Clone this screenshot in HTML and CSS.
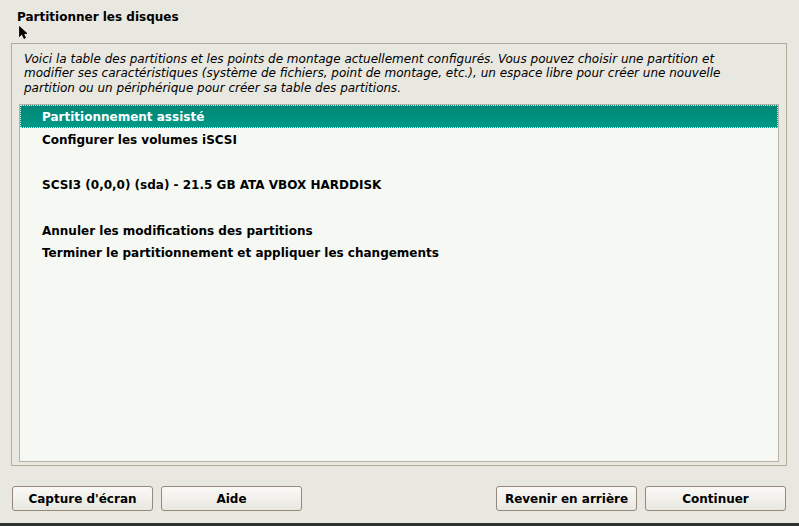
FILE: index.html
```html
<!DOCTYPE html>
<html lang="fr">
<head>
<meta charset="utf-8">
<title>Partitionner les disques</title>
<link rel="stylesheet" href="styles.css">
</head>
<body>
<div class="page">
  <h1 class="title">Partitionner les disques</h1>
  <div class="frame">
    <p class="desc">Voici la table des partitions et les points de montage actuellement configurés. Vous pouvez choisir une partition et modifier ses caractéristiques (système de fichiers, point de montage, etc.), un espace libre pour créer une nouvelle partition ou un périphérique pour créer sa table des partitions.</p>
    <ul class="list">
      <li class="row selected">Partitionnement assisté</li>
      <li class="row">Configurer les volumes iSCSI</li>
      <li class="row"></li>
      <li class="row">SCSI3 (0,0,0) (sda) - 21.5 GB ATA VBOX HARDDISK</li>
      <li class="row"></li>
      <li class="row">Annuler les modifications des partitions</li>
      <li class="row">Terminer le partitionnement et appliquer les changements</li>
    </ul>
  </div>
  <div class="buttons">
    <div class="group">
      <button class="btn">Capture d'écran</button>
      <button class="btn">Aide</button>
    </div>
    <div class="group">
      <button class="btn">Revenir en arrière</button>
      <button class="btn">Continuer</button>
    </div>
  </div>
  <div class="taskbar"></div>
  <svg class="cursor" width="10" height="14" viewBox="0 0 10 14">
    <path d="M0.5 0.5 L0.5 10.5 L3 8 L5 12.5 L6.5 11.8 L4.6 7.5 L8 7.5 Z" fill="#000" stroke="#000" stroke-width="0.8" stroke-linejoin="miter"/>
  </svg>
</div>
</body>
</html>
```
FILE: styles.css
```css
* { box-sizing: border-box; }
html, body {
  margin: 0;
  padding: 0;
  width: 799px;
  height: 526px;
  overflow: hidden;
  background: #e8e7e0;
  font-family: "DejaVu Sans", sans-serif;
  color: #000;
}
.page {
  position: relative;
  width: 799px;
  height: 526px;
  display: flex;
  flex-direction: column;
}
.title {
  margin: 0;
  padding: 9px 0 0 17px;
  height: 43px;
  font-size: 12px;
  font-weight: bold;
  line-height: 16px;
}
.frame {
  margin: 0 12px 0 11px;
  height: 424px;
  border: 1px solid #b4ab9b;
  display: flex;
  flex-direction: column;
  padding: 0 7px 3px 7px;
}
.desc {
  margin: 0;
  padding: 8px 0 0 5px;
  width: 730px;
  height: 60px;
  font-size: 12px;
  font-style: italic;
  line-height: 14.5px;
}
.list {
  list-style: none;
  margin: 0;
  padding: 0;
  flex: 1;
  background: #f5f8f3;
  border: 1px solid #b9b2a4;
  font-size: 12px;
  font-weight: bold;
}
.row {
  height: 22.67px;
  line-height: 24px;
  padding-left: 22px;
  white-space: nowrap;
}
.selected {
  height: 23px;
  background: linear-gradient(#008576, #009a86);
  color: #fff;
  outline: 1px dotted #d8efe9;
  outline-offset: -1px;
}
.buttons {
  display: flex;
  justify-content: space-between;
  padding: 20px 13px 0 12px;
  height: 57px;
}
.group {
  display: flex;
  gap: 8px;
}
.btn {
  width: 141px;
  height: 25px;
  border: 1px solid #94897a;
  border-radius: 3px;
  background: linear-gradient(#faf9f6, #e9e7e1);
  font-family: "DejaVu Sans", sans-serif;
  font-size: 12px;
  font-weight: bold;
  color: #000;
  padding: 0;
}
.taskbar {
  height: 3px;
  background: #2f3232;
}
.cursor {
  position: absolute;
  left: 19px;
  top: 26px;
}
```
